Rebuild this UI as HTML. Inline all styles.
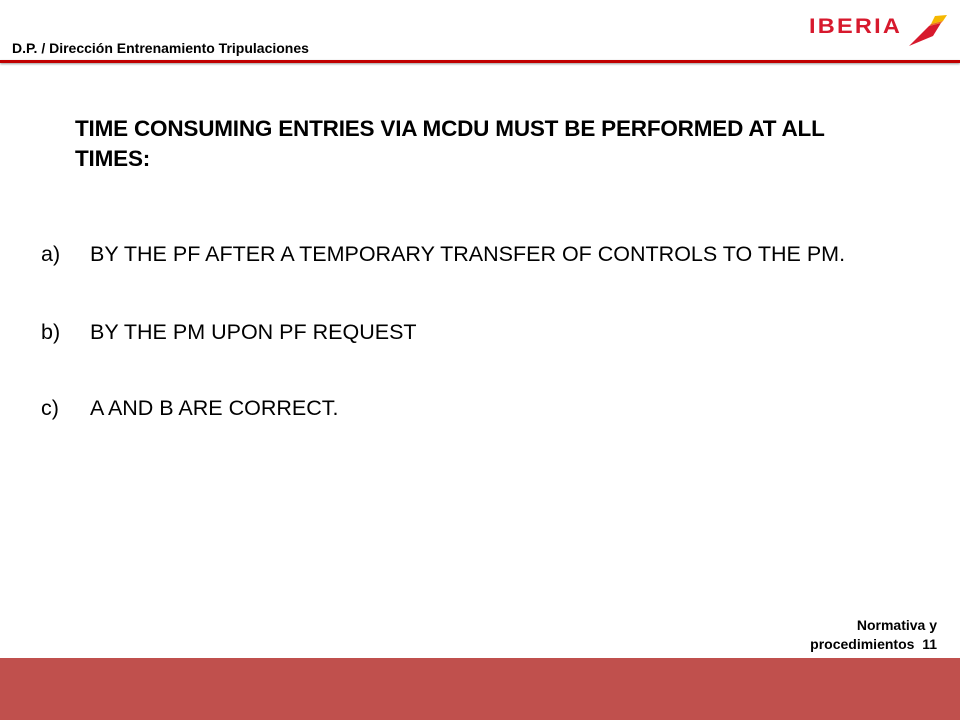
<!DOCTYPE html>
<html><head><meta charset="utf-8"><style>
body{margin:0;width:960px;height:720px;position:relative;background:#fff;font-family:"Liberation Sans",sans-serif;overflow:hidden}
.hdr{position:absolute;left:12px;top:40px;font-size:14px;font-weight:bold;color:#000}
.line{position:absolute;left:0;top:60px;width:960px;height:3px;background:#c00000;box-shadow:0 1px 2px #999}
.logo{position:absolute;left:809px;top:15px;font-size:21px;font-weight:900;color:#d7192d;letter-spacing:2px;transform:scaleX(1.12);transform-origin:left}
.title{position:absolute;left:75px;top:114px;font-size:22.5px;font-weight:bold;line-height:30px;letter-spacing:-0.2px}
.opt{position:absolute;left:41px;font-size:21.5px}
.opt span{position:absolute;left:49px;white-space:nowrap}
.foot{position:absolute;right:23px;top:616px;font-size:14px;font-weight:bold;text-align:right;line-height:19px}
.band{position:absolute;left:0;top:658px;width:960px;height:62px;background:#c0504d}
</style></head><body>
<div class="logo">IBERIA</div>
<svg style="position:absolute;left:905px;top:14px" width="42" height="32" viewBox="0 0 42 32">
<path d="M30 2 L42 1 L38 7 L26 10 Z" fill="#f5b800"/>
<path d="M24 12 L36 9 L28 22 L4 32 Z" fill="#d7192d"/>
<path d="M26 10 L38 7 L36 9 L24 12 Z" fill="#ec6a1e"/>
</svg>
<div class="hdr">D.P. / Dirección Entrenamiento Tripulaciones</div>
<div class="line"></div>
<div class="title">TIME CONSUMING ENTRIES VIA MCDU MUST BE PERFORMED AT ALL<br>TIMES:</div>
<div class="opt" style="top:242px">a)<span>BY THE PF AFTER A TEMPORARY TRANSFER OF CONTROLS TO THE PM.</span></div>
<div class="opt" style="top:320px">b)<span>BY THE PM UPON PF REQUEST</span></div>
<div class="opt" style="top:396px">c)<span>A AND B ARE CORRECT.</span></div>
<div class="foot">Normativa y<br>procedimientos&nbsp; 11</div>
<div class="band"></div>
</body></html>
